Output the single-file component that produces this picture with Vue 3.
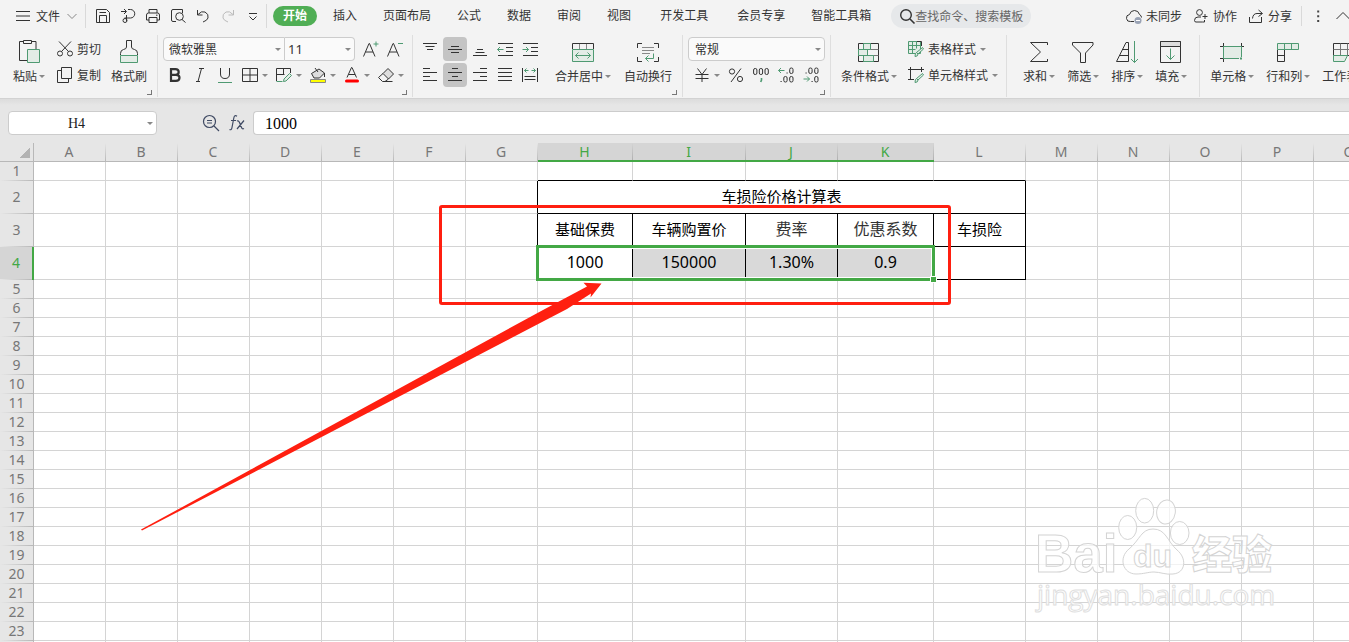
<template>
  <div class="app">
    <header class="ribbon">
      <div class="menu-bar">
        <button class="file-btn">
          <Icon name="burger" />
          <span>文件</span>
          <Icon name="chevron" class="file-arrow" />
        </button>
        <div class="quick-tools">
          <button v-for="name in quickTools" :key="name" class="plain-btn" :title="name">
            <Icon :name="name" />
          </button>
        </div>
        <nav class="tabs">
          <button
            v-for="tab in tabs"
            :key="tab"
            class="tab"
            :class="{ active: tab === activeTab, wide: tab === '开发工具' }"
            @click="activeTab = tab"
          >{{ tab }}</button>
        </nav>
        <label class="search">
          <Icon name="search" />
          <input type="text" placeholder="查找命令、搜索模板" />
        </label>
        <div class="account">
          <button class="plain-btn account-btn"><Icon name="cloud" />未同步</button>
          <button class="plain-btn account-btn"><Icon name="person" />协作</button>
          <button class="plain-btn account-btn"><Icon name="share" />分享</button>
        </div>
        <div class="window-tools">
          <button class="plain-btn"><Icon name="dots" /></button>
          <button class="plain-btn"><Icon name="collapse" /></button>
        </div>
      </div>

      <div class="tool-bar">
        <section class="group clip-group">
          <button class="big-btn"><Icon name="paste" :size="24" /><span class="caret-label">粘贴</span></button>
          <div class="rows">
            <button class="row-btn"><Icon name="cut" />剪切</button>
            <button class="row-btn"><Icon name="copy" />复制</button>
          </div>
          <button class="big-btn brush-btn"><Icon name="brush" :size="24" /><span>格式刷</span></button>
          <i class="corner"></i>
        </section>

        <section class="group font-group">
          <div class="rows">
            <div class="row">
              <div class="joined">
                <div class="select-box font-name">
                  <select aria-label="字体"><option>微软雅黑</option></select>
                </div>
                <div class="select-box font-size">
                  <select aria-label="字号"><option>11</option></select>
                </div>
              </div>
              <button class="plain-btn grow-btn"><Icon name="grow" /></button>
              <button class="plain-btn grow-btn"><Icon name="shrink" /></button>
            </div>
            <div class="row format-row">
              <button class="plain-btn slim"><Icon name="bold" /></button>
              <button class="plain-btn slim"><Icon name="italic" /></button>
              <button class="plain-btn slim"><Icon name="underline" /></button>
              <button v-for="name in cellTools" :key="name" class="plain-btn drop"><Icon :name="name" /></button>
            </div>
          </div>
          <i class="corner"></i>
        </section>

        <section class="group align-group">
          <div class="align-grid">
            <button
              v-for="name in alignTools"
              :key="name"
              class="plain-btn align-btn"
              :class="{ on: name === 'alignMiddle' || name === 'alignCenter' }"
            ><Icon :name="name" /></button>
          </div>
          <button class="big-btn"><Icon name="merge" :size="24" /><span class="caret-label">合并居中</span></button>
          <button class="big-btn"><Icon name="wrap" :size="24" /><span>自动换行</span></button>
          <i class="corner"></i>
        </section>

        <section class="group number-group">
          <div class="rows">
            <div class="select-box number-format">
              <select aria-label="数字格式"><option>常规</option></select>
            </div>
            <div class="row number-row">
              <button class="plain-btn drop"><Icon name="yen" /></button>
              <button v-for="name in numberTools" :key="name" class="plain-btn slim"><Icon :name="name" /></button>
            </div>
          </div>
          <i class="corner"></i>
        </section>

        <section class="group style-group">
          <button class="big-btn"><Icon name="condition" :size="24" /><span class="caret-label">条件格式</span></button>
          <div class="rows">
            <button class="row-btn drop"><Icon name="tableStyle" />表格样式</button>
            <button class="row-btn drop"><Icon name="cellStyle" />单元格样式</button>
          </div>
        </section>

        <section class="group edit-group">
          <button v-for="item in editTools" :key="item.icon" class="big-btn">
            <Icon :name="item.icon" :size="24" /><span class="caret-label">{{ item.label }}</span>
          </button>
        </section>

        <section class="group cell-group">
          <button v-for="item in sheetTools" :key="item.icon" class="big-btn">
            <Icon :name="item.icon" :size="24" /><span class="caret-label">{{ item.label }}</span>
          </button>
        </section>
      </div>
    </header>

    <div class="formula-bar">
      <div class="name-box">
        <input type="text" aria-label="名称框" value="H4" />
      </div>
      <button class="plain-btn zoom-btn"><Icon name="lookup" /></button>
      <button class="plain-btn fx-btn"><Icon name="fx" /></button>
      <input class="formula-input" type="text" aria-label="编辑栏" value="1000" />
    </div>

    <main class="sheet">
      <table class="grid">
        <colgroup>
          <col class="col-row" />
          <col v-for="c in columns" :key="c" :class="'col-' + c.toLowerCase()" />
        </colgroup>
        <thead>
          <tr>
            <th class="select-all"></th>
            <th v-for="c in columns" :key="c" class="col-head" :class="{ picked: 'HIJK'.includes(c) }">{{ c }}</th>
          </tr>
        </thead>
        <tbody>
          <tr v-for="r in rowCount" :key="r" :class="{ tall: r >= 2 && r <= 4 }">
            <th class="row-head" :class="{ picked: r === 4 }">{{ r }}</th>
            <td
              v-for="cell in cellsOf(r)"
              :key="cell.col"
              :colspan="cell.span"
              :class="cell.classes"
            >{{ cell.text }}<div v-if="cell.col === 'H' && r === 4" class="selection"><i class="handle"></i></div></td>
          </tr>
        </tbody>
      </table>

      <div class="mark-box"></div>
      <svg class="mark-arrow" width="480" height="260" viewBox="130 280 480 260">
        <path d="M141 529.6 L543 310 L587 286.5 L583.5 282.8 L601.5 283.6 L590.5 297.5 L591 293.5 L567 309 L142 530.6z" fill="#ff1f10" />
      </svg>

      <svg class="watermark" width="329" height="152" viewBox="0 0 329 152">
        <g class="watermark-shape">
          <ellipse cx="107.7" cy="37.5" rx="9" ry="12" />
          <ellipse cx="124.7" cy="20.7" rx="9" ry="12.3" />
          <ellipse cx="146" cy="22" rx="9.3" ry="12" transform="rotate(8 146 22)" />
          <ellipse cx="159.7" cy="43" rx="9.3" ry="11.5" />
          <path d="M133 39C121 39 120 50 109 59C98 68 103 84 116 84C124 84 128 82 134 82C140 82 146 85 153 84C166 83 167 68 157 60C147 51 146 39 133 39z" />
          <text class="mark-bai" x="15" y="82">Bai</text>
          <text class="mark-du" x="113" y="77">du</text>
          <text class="mark-cn" x="172" y="79">经验</text>
          <text class="mark-url" x="17" y="115">jingyan.baidu.com</text>
        </g>
      </svg>
    </main>
  </div>
</template>

<script setup>
import { computed, h, onBeforeUnmount, onMounted, ref } from 'vue'

const G = 'stroke="#4f9a72"'
const GF = 'stroke="#4f9a72" fill="#e3ece6"'

const pen = `<path ${GF} d="M14.5 6.5l1 1.5-5.5 5-1.5-1.5zM8.5 11.5q-1.5.5-1.5 4 3 0 3-2.5"/>`

const icons = {
  burger: '<path d="M1 3.5h14M1 8h14M1 12.5h14"/>',
  chevron: '<path stroke="#888" d="M3.5 6l4.5 4.5L12.500 6"/>',
  save: '<path d="M1.500 1.500h10l3 3v10h-13zM4.500 14v-6.500h7V14M4.500 4.500h6.500"/>',
  exportPdf: '<path d="M1 3.500h5M4 1l2.500 2.500L4 6M8 1.500h2.500a4 4 0 0 1 0 8.500H4.500M6.500 7v6"/><circle cx="5" cy="12.500" r="2"/>',
  print: '<path d="M4 5V1.500h8V5M4 12H1.500V7q0-2 2-2h9q2 0 2 2v5H12M4 9.500h8v5H4zM11 7.200h1.500"/>',
  preview: '<path d="M6 13.500H3q-1.500 0-1.500-1.500V3Q1.500 1.500 3 1.500h9.500V5"/><circle cx="9.500" cy="8.500" r="3.800"/><path d="M12 11.500l3.500 3"/>',
  undo: '<path d="M2.500 2v5h5M3 6.500q3.500-4 7-2.500 4 2 3 6-.8 2.500-5 4"/>',
  redo: '<path stroke="#bbb" d="M13.500 2v5h-5M13 6.500q-3.500-4-7-2.500-4 2-3 6 .8 2.500 5 4"/>',
  more: '<path d="M4 5.500h8M4.500 8.500l3.500 3.500 3.500-3.500"/>',
  search: '<circle cx="7" cy="7" r="5.300" stroke-width="1.400"/><path stroke-width="1.600" d="M11 11l4.500 4.500"/>',
  cloud: '<path d="M8 13.500H4.500A3.500 3.500 0 0 1 3.500 6.500Q4.500 2.500 8.500 2.500t5 4q2 1 2 3"/><circle cx="12" cy="12.500" r="3.500" fill="#9aa3b5" stroke="none"/><path stroke="#fff" d="M10 12.500h4"/>',
  person: '<circle cx="6.500" cy="4.500" r="2.900"/><path d="M9.500 14H3q-1.500 0-1.500-1.500Q1.500 9 5 9h3M9.500 8.500h5M12 6v5M9.500 14h2v-2"/>',
  share: '<path d="M1.500 9v5.500h12V9M10.500 2l4 3.500-4 3M14 5.500H9q-4 0-4.500 5"/>',
  dots: '<path fill="#444" stroke="none" d="M7.200 2.500h2v2h-2zM7.200 7.200h2v2h-2zM7.200 12h2v2h-2z"/>',
  collapse: '<path d="M1.500 11L8 4.500l6.500 6.500"/>',

  paste: `<path d="M10 20.500H2.500v-19h4M15 1.500h4v8M6.500.500h8v3h-8z"/><path ${GF} d="M10.500 9.500h12v13h-12z"/>`,
  brush: `<path d="M3.500 15v-1.500q0-3.500 3-4 3-.5 3-2.500V.500h5V7q0 2 3 2.500 3 .5 3 4V15"/><path ${GF} d="M3.500 15.500h17v7h-17z"/>`,
  cut: '<circle cx="3" cy="12.500" r="2.500"/><circle cx="13" cy="12.500" r="2.500"/><path d="M2 .500l9.500 10M14 .500l-9.500 10"/>',
  copy: '<path d="M4.500.500h10v11h-10zM4.500 3.500h-4v12h11v-4"/>',

  grow: `<path d="M.500 15.500L6 2.500h.5l5.500 13M2.500 11h7.500"/><path ${G} d="M10.500 3h5M13 .500v5"/>`,
  shrink: `<path d="M.500 15.500L6 2.500h.5l5.500 13M2.500 11h7.500"/><path ${G} d="M11 2.500h5"/>`,
  bold: '<path stroke-width="2.200" d="M4 2.200h4.500q3.200 0 3.200 2.800T8.500 7.800H4zM4 7.800h5q3.500 0 3.500 3t-3.500 3H4z"/>',
  italic: '<path d="M7 1.500h5M4 14.500h4M9.500 1.500l-3.500 13"/>',
  underline: `<path d="M3.500 1v6q0 4.500 4.500 4.500T12.500 7V1"/><path ${G} d="M1 15.500h14"/>`,
  borders: '<path d="M.500 1.500h15v13H.500zM8 1.500v13M.500 8h15"/>',
  drawBorder: `<path d="M.500 14V1.500h14V6M.500 7.500h8M7.500 1.500V8"/><path ${G} d="M.500 14.500h6"/><path ${GF} d="M13.500 6.500l2 2-5.500 5.500-2.500.5.5-2.500z"/>`,
  fill: '<path fill="#ddd" d="M1.500 6.500L9 2l5.500 4-5 5H4z"/><path d="M5 1l3 4M14.500 6v4"/><path stroke="#888" fill="#ff0" d="M.500 12.500h15v3H.500z"/>',
  fontColor: '<path d="M3 10.500L7.500.500h.5l4.500 10M4.500 7.500H11"/><path stroke="red" stroke-width="3" stroke-linecap="round" d="M2.500 14h11"/>',
  eraser: '<path fill="#ddd" d="M10 1.500l5.500 5.500-5 5L5 6.500z"/><path d="M5 6.500L.500 10.500l4 4h2.500l3.500-2.500M6 14.500h8.500"/>',

  alignTop: '<path d="M1 2.500h14M3.500 5.500h9M5 8.500h6"/>',
  alignMiddle: '<path d="M4 5.500h8M1 8.500h14M4 11.500h8"/>',
  alignBottom: '<path d="M5 8.500h6M3.500 11.500h9M1 14.500h14"/>',
  outdent: `<path d="M1 2.500h15M9 6.500h7M9 10.500h7M1 14.500h15"/><path ${G} d="M.500 8.500h6M3 6L.500 8.500 3 11"/>`,
  indent: `<path d="M1 2.500h15M9 6.500h7M9 10.500h7M1 14.500h15"/><path ${G} d="M.500 8.500h6M4 6l2.500 2.500L4 11"/>`,
  alignLeft: '<path d="M1 1.500h7M1 5.500h14M1 9.500h7M1 13.500h14"/>',
  alignCenter: '<path d="M5 1.500h6M1 5.500h14M5 9.500h6M1 13.500h14"/>',
  alignRight: '<path d="M8 1.500h7M1 5.500h14M8 9.500h7M1 13.500h14"/>',
  justify: '<path d="M1 1.500h14M1 5.500h14M1 9.500h14M1 13.500h14"/>',
  distribute: `<path d="M.500 1v14M15.500 1v14M2.500 9.500h11M2.500 12.500h11"/><path ${G} d="M2.500 3.500h4M4.500 1.500l-2 2 2 2M13.500 3.500h-4M11.500 1.500l2 2-2 2"/>`,
  merge: `<path d="M1.500 9V3.500h21V9"/><path stroke="#888" d="M8.500 4v5M15.500 4v5"/><path ${GF} d="M1.500 9.500h21v12h-21z"/><path ${G} d="M4.500 15.500h15M7.500 12.500l-3 3 3 3M16.500 12.500l3 3-3 3"/>`,
  wrap: `<path d="M1.500 8V3.500H6M18 3.500h4.500V8M1.500 17v4.500H6M18 21.500h4.500V17"/><path stroke="#888" d="M6 7.500h12M6 10.500h12M6 13.500h8"/><path ${G} d="M17.500 13.500v5H9.500M12.500 15.500l-3 3 3 3"/>`,

  yen: '<path d="M3.500 1.500L8 7.500l4.500-6M8 7.500V15M1.500 7.500h13M1.500 11.500h13"/>',
  percent: '<circle cx="4" cy="4.500" r="2.600"/><circle cx="12" cy="12" r="2.600"/><path d="M13 1.500L3 15"/>',
  thousands: `<rect x=".6" y="1.500" width="3.300" height="6" rx="1.500"/><rect x="6.300" y="1.500" width="3.300" height="6" rx="1.500"/><rect x="12" y="1.500" width="3.300" height="6" rx="1.500"/><path stroke="#4f9a72" stroke-width="1.600" d="M8.500 11v2l-.8 2"/>`,
  addDecimal: `<rect x="11.700" y="1" width="3.300" height="5.500" rx="1.500"/><rect x="5.800" y="9.500" width="3.300" height="5.500" rx="1.500"/><rect x="11.700" y="9.500" width="3.300" height="5.500" rx="1.500"/><path d="M2.500 14.500h1.200M8.500 6h1.200"/><path ${G} d="M.500 3.500h6M3 1L.500 3.500 3 6"/>`,
  cutDecimal: `<rect x="5.800" y="1" width="3.300" height="5.500" rx="1.500"/><rect x="11.700" y="1" width="3.300" height="5.500" rx="1.500"/><rect x="11.700" y="9.500" width="3.300" height="5.500" rx="1.500"/><path d="M2.500 6h1.200M8.500 14.500h1.200"/><path ${G} d="M.500 12h6M4 9.500L6.500 12 4 14.500"/>`,

  condition: `<path d="M1.500 3.500h20v18h-20z"/><path stroke="#777" d="M1.500 9.500h20M1.500 15.500h20"/><path ${GF} d="M6.500 3.500h7v6h-7zM1.500 9.500h9v6h-9zM6.500 15.500h10v6h-10z"/>`,
  tableStyle: `<path ${GF} d="M.500.500h12v12H.500z"/><path d="M9 .500h4.500v4.500"/><path ${G} d="M.500 4.500h12M.500 8.500h7M4.500.500v12M8.500.500v7"/>${pen}`,
  cellStyle: `<path d="M0 2.500h16M2.500 0v13M13.500 0v5M0 12.500h6"/>${pen}`,
  sum: '<path d="M20.500 5V2.500h-17L13.500 12l-10 9.500h17V19"/>',
  filter: '<path d="M1.500 2.500h20.500v2.500l-7.500 8v9.500h-5V13l-8-8z"/>',
  sort: `<path d="M1.500 21.500L11 2.500h2.500v19zM7.500 9.500h6M4.500 15.500h9"/><path ${G} d="M19.500 1v21.500M16 19l3.500 3.500L23 19"/>`,
  fillDown: `<path d="M1.500 1.500h20v21h-20z"/><path fill="#ddd" d="M1.500 1.500h20v5h-20z"/><path ${G} d="M11.500 8.500v11M7.500 15.500l4 4 4-4"/>`,
  cells: `<path d="M0 6.500h24M3.500 3v19M21.500 3v11M0 18.500h16"/><path ${GF} d="M19 18.500H3.500v-12h18V17"/><path stroke="none" fill="#4f9a72" d="M20 17.500h2v2h-2z"/>`,
  rowCol: `<path d="M1.500 9.500v12h7v-12M1.500 15.500h7"/><path ${GF} d="M1.500 3.500h21v6h-21z"/><path ${G} d="M8.500 3.500v6M15.500 3.500v6"/>`,
  worksheet: `<path d="M1.500 3.500h21v12h-21z"/><path stroke="#777" d="M1.500 9.500h21M8.500 3.500v12M15.500 3.500v12"/><path ${GF} d="M1.500 15.500h14l-3 6h-11z"/>`,

  lookup: '<g stroke="#3f4a63" stroke-width="1.200"><circle cx="6.500" cy="6.500" r="6"/><path d="M4 5.500h5M4 8h5M11 11l5 5"/></g>',
  fx: '<path stroke="#3f4a63" stroke-width="1.200" d="M8 1.200Q5.500-.500 4.800 3L3 12.500q-.5 3-2.500 2M2 5.500h5M8 6q1.500-.8 2.500 1.500l2 5q.8 2 2.500 1M15 5.500L8 14"/>'
}

const Icon = (props) =>
  h('svg', {
    class: 'icon',
    width: props.size || 16,
    height: props.size || 16,
    viewBox: props.size ? '0 0 24 24' : '0 0 16 16',
    fill: 'none',
    stroke: '#333',
    'aria-hidden': 'true',
    innerHTML: icons[props.name]
  })
Icon.props = ['name', 'size']

const activeTab = ref('开始')
const tabs = ['开始', '插入', '页面布局', '公式', '数据', '审阅', '视图', '开发工具', '会员专享', '智能工具箱']
const quickTools = ['save', 'exportPdf', 'print', 'preview', 'undo', 'redo', 'more']
const cellTools = ['borders', 'drawBorder', 'fill', 'fontColor', 'eraser']
const alignTools = [
  'alignTop', 'alignMiddle', 'alignBottom', 'outdent', 'indent',
  'alignLeft', 'alignCenter', 'alignRight', 'justify', 'distribute'
]
const numberTools = ['percent', 'thousands', 'addDecimal', 'cutDecimal']
const editTools = [
  { icon: 'sum', label: '求和' },
  { icon: 'filter', label: '筛选' },
  { icon: 'sort', label: '排序' },
  { icon: 'fillDown', label: '填充' }
]
const sheetTools = [
  { icon: 'cells', label: '单元格' },
  { icon: 'rowCol', label: '行和列' },
  { icon: 'worksheet', label: '工作表' }
]

// only as many rows and columns as the window can show
const winWidth = ref(window.innerWidth)
const winHeight = ref(window.innerHeight)
const columns = computed(() => {
  const count = Math.max(12, Math.ceil((winWidth.value - 162) / 72))
  return 'ABCDEFGHIJKLMNOPQRSTUVWXYZ'.slice(0, count).split('')
})
const rowCount = computed(() => Math.max(4, Math.ceil((winHeight.value - 204) / 19)))

function onResize() {
  winWidth.value = window.innerWidth
  winHeight.value = window.innerHeight
}
onMounted(() => window.addEventListener('resize', onResize))
onBeforeUnmount(() => window.removeEventListener('resize', onResize))

const data = {
  H2: '车损险价格计算表',
  H3: '基础保费', I3: '车辆购置价', J3: '费率', K3: '优惠系数', L3: '车损险',
  H4: '1000', I4: '150000', J4: '1.30%', K4: '0.9'
}

function cellsOf(r) {
  const inTable = r >= 2 && r <= 4
  // the title in row 2 is merged over H:L
  return columns.value
    .filter((c) => !(r === 2 && 'IJKL'.includes(c)))
    .map((c) => ({
      col: c,
      text: data[c + r] || '',
      span: r === 2 && c === 'H' ? 5 : 1,
      classes: {
        'line-right': inTable && ('GL'.includes(c) || (r > 2 && 'HIJK'.includes(c)) || c === 'H'),
        'line-bottom': r <= 4 && 'HIJKL'.includes(c),
        shaded: r === 4 && 'IJK'.includes(c),
        soft: r === 3 && 'JK'.includes(c),
        number: r === 4,
        current: r === 4 && c === 'H'
      }
    }))
}
</script>

<style>
body {
  margin: 0;
}
</style>

<style scoped>
.app {
  display: flex;
  flex-direction: column;
  height: 100vh;
  overflow: hidden;
  background: #fff;
  color: #333;
  font-family: "Noto Sans", "Noto Sans CJK SC", sans-serif;
  font-size: 12px;
}

button,
input,
select {
  margin: 0;
  padding: 0;
  border: 0;
  background: none;
  color: inherit;
  font: inherit;
  outline: none;
}

.icon {
  display: block;
  flex-shrink: 0;
  overflow: visible;
}

.plain-btn {
  display: flex;
  align-items: center;
  flex-shrink: 0;
}

/* menu row */
.ribbon {
  flex-shrink: 0;
  background: #f3f3f3;
  border-bottom: 1px solid #d2d2d2;
  overflow: hidden;
}

.menu-bar {
  display: flex;
  align-items: center;
  height: 32px;
  padding-left: 15px;
  white-space: nowrap;
}

.file-btn {
  display: flex;
  align-items: center;
  gap: 5px;
  height: 24px;
  padding-right: 5px;
  border-right: 1px solid #d9d9d9;
}

.file-arrow {
  margin-left: -1px;
}

.quick-tools {
  display: flex;
  align-items: center;
  gap: 9px;
  height: 24px;
  padding: 0 5px 0 9px;
  border-right: 1px solid #d9d9d9;
}

.tabs {
  display: flex;
  align-items: center;
  margin-left: 6px;
}

.tab {
  height: 20px;
  padding: 0 13px;
  line-height: 20px;
}

.tab.wide {
  padding: 0 16px;
}

.tab.active {
  margin-right: 3px;
  padding: 0 10px;
  border-radius: 10px;
  background: #50ae55;
  color: #fff;
  font-weight: bold;
}

.search {
  display: flex;
  align-items: center;
  width: 132px;
  height: 24px;
  margin-left: 7px;
  padding-left: 8px;
  border-radius: 12px;
  background: #e6e8ea;
}

.search input {
  width: 110px;
}

.search input::placeholder {
  color: #666;
  opacity: 1;
}

.account {
  display: flex;
  gap: 11px;
  height: 20px;
  margin-left: auto;
  padding-right: 9px;
  border-right: 1px solid #d9d9d9;
}

.account-btn {
  gap: 4px;
}

.window-tools {
  display: flex;
  gap: 9px;
  padding-left: 8px;
  width: 39px;
}

/* tool groups */
.tool-bar {
  display: flex;
  height: 63px;
  padding: 3px 0 0;
  white-space: nowrap;
}

.group {
  position: relative;
  display: flex;
  flex-shrink: 0;
  box-sizing: border-box;
  padding-top: 2px;
  height: 62px;
  border-right: 1px solid #dedede;
}

.clip-group {
  gap: 12px;
  padding-left: 13px;
  padding-right: 10px;
}

.font-group {
  width: 255px;
  padding-left: 5px;
}

.align-group {
  gap: 13px;
  padding-left: 5px;
  padding-right: 10px;
}

.number-group {
  padding-left: 5px;
  padding-right: 5px;
}

.style-group {
  gap: 11px;
  padding-left: 10px;
  padding-right: 8px;
}

.edit-group {
  gap: 12px;
  padding-left: 16px;
  padding-right: 12px;
}

.cell-group {
  gap: 12px;
  padding-left: 10px;
  border-right: 0;
}

.corner {
  position: absolute;
  right: 5px;
  bottom: 2px;
  width: 4px;
  height: 4px;
  border-right: 1px solid #777;
  border-bottom: 1px solid #777;
}

.big-btn {
  display: flex;
  flex-direction: column;
  align-items: center;
  gap: 4px;
  height: 50px;
  padding-top: 3px;
  line-height: 18px;
}

.brush-btn {
  margin-left: -2px;
}

.caret-label::after,
.drop::after {
  content: "";
  display: inline-block;
  width: 0;
  border: 3px solid transparent;
  border-top-color: #888;
  border-bottom: 0;
}

.caret-label::after {
  margin-left: 2px;
  vertical-align: 3px;
}

.drop::after {
  margin-left: 4px;
}

.rows {
  display: flex;
  flex-direction: column;
  gap: 2px;
}

.row {
  display: flex;
  align-items: center;
  gap: 8px;
  height: 24px;
}

.row-btn {
  display: flex;
  align-items: center;
  height: 24px;
  text-align: left;
}

.row-btn .icon {
  margin-right: 4px;
}

.format-row {
  padding-left: 4px;
}

.number-row {
  padding-left: 6px;
}

.slim {
  width: 17px;
}

.joined {
  display: flex;
}

.select-box {
  position: relative;
  box-sizing: border-box;
  height: 24px;
  border: 1px solid #ccc;
  border-radius: 4px;
  background: #fafafa;
}

.select-box::after,
.name-box::after {
  content: "";
  position: absolute;
  top: 10px;
  right: 3px;
  border: 3px solid transparent;
  border-top-color: #888;
  border-bottom: 0;
  pointer-events: none;
}

.select-box select {
  display: block;
  width: 100%;
  height: 22px;
  appearance: none;
}

.font-name {
  width: 122px;
  padding-left: 5px;
  border-radius: 4px 0 0 4px;
}

.font-size {
  width: 70px;
  padding-left: 3px;
  border-left: 0;
  border-radius: 0 4px 4px 0;
  font-size: 13px;
}

.number-format {
  width: 137px;
  padding-left: 6px;
}

.align-grid {
  display: grid;
  grid-template-columns: repeat(5, 24px);
  grid-template-rows: repeat(2, 24px);
  gap: 2px 1px;
}

.align-btn {
  justify-content: center;
  border-radius: 4px;
}

.align-btn.on {
  background: #c4c4c4;
}

/* formula bar */
.formula-bar {
  display: flex;
  align-items: center;
  flex-shrink: 0;
  height: 44px;
  box-sizing: border-box;
  padding: 8px 0 4px 8px;
  background: linear-gradient(#dcdcdc, #e6e6e6 6px);
  font-family: "Liberation Serif", serif;
  color: #222;
}

.name-box {
  position: relative;
  box-sizing: border-box;
  width: 149px;
  height: 24px;
  padding-right: 12px;
  border: 1px solid #ccc;
  border-radius: 4px;
  background: #fff;
}

.name-box input {
  box-sizing: border-box;
  width: 100%;
  height: 22px;
  padding-top: 2px;
  text-align: center;
  font-size: 14px;
}

.zoom-btn {
  margin-left: 46px;
}

.fx-btn {
  margin-left: 10px;
}

.formula-input {
  flex: 1;
  box-sizing: border-box;
  height: 24px;
  margin-left: 8px;
  padding-top: 2px;
  padding-left: 11px;
  border: 1px solid #ccc;
  border-right: 0;
  border-radius: 4px 0 0 4px;
  background: #fff;
  color: #000;
  font-size: 16px;
}

/* sheet */
.sheet {
  position: relative;
  flex: 1;
  min-height: 0;
  overflow: hidden;
}

.grid {
  width: 100%;
  table-layout: fixed;
  border-collapse: separate;
  border-spacing: 0;
}

.grid col {
  width: 72px;
}

.grid .col-row {
  width: 34px;
}

.grid .col-h {
  width: 95px;
}

.grid .col-i {
  width: 113px;
}

.grid .col-j,
.grid .col-l {
  width: 92px;
}

.grid .col-k {
  width: 96px;
}

.grid th,
.grid td {
  box-sizing: border-box;
  height: 19px;
  padding: 0;
  text-align: center;
  vertical-align: middle;
  white-space: nowrap;
}

.grid th {
  background: #e6e6e6;
  color: #777;
  font-size: 14px;
  font-weight: normal;
  line-height: 18px;
}

.grid td {
  border-right: 1px solid #d4d4d4;
  border-bottom: 1px solid #d4d4d4;
  color: #000;
  font-size: 15px;
  line-height: 18px;
}

.grid .tall th,
.grid .tall td {
  height: 33px;
  padding-bottom: 2px;
}

.grid .col-head {
  padding-right: 2px;
  border-bottom: 1px solid #b8b8b8;
  background: linear-gradient(#e6e6e6, #b8b8b8) right / 1px 100% no-repeat #e6e6e6;
}

.grid .col-head.picked {
  border-bottom: 2px solid #43a845;
  background: linear-gradient(#d5d5d5, #b0b0b0) right / 1px 100% no-repeat #d5d5d5;
  color: #43a845;
  line-height: 17px;
}

.grid .row-head {
  padding-bottom: 2px;
  border-right: 1px solid #b8b8b8;
  background: linear-gradient(to right, #e6e6e6, #b8b8b8) bottom / 100% 1px no-repeat #e6e6e6;
  line-height: 16px;
}

.grid .row-head.picked {
  border-right: 2px solid #43a845;
  background-color: #d5d5d5;
  color: #43a845;
}

.grid .select-all {
  border-right: 1px solid #b8b8b8;
  border-bottom: 1px solid #b8b8b8;
  background: linear-gradient(135deg, transparent 50%, #b3b3b3 50%) 20px 5px / 10px 10px no-repeat #e6e6e6;
}

.grid .line-right {
  border-right-color: #000;
}

.grid .line-bottom {
  border-bottom-color: #000;
}

.grid .shaded {
  background: #d9d9d9;
}

.grid .number {
  font-size: 16px;
}

.grid .soft {
  color: #333;
  font-size: 16px;
}

.grid .current {
  position: relative;
}

/* runs from H4 over the three cells to its right */
.selection {
  position: absolute;
  z-index: 1;
  top: -2px;
  left: -2px;
  box-sizing: border-box;
  width: 399px;
  height: 36px;
  border: 3px solid #43a845;
  box-shadow: inset 0 0 0 1px #fff;
}

.handle {
  position: absolute;
  right: -5px;
  bottom: -5px;
  width: 5px;
  height: 5px;
  border: 1px solid #fff;
  background: #43a845;
}

.mark-box {
  position: absolute;
  z-index: 2;
  top: 62px;
  left: 439px;
  box-sizing: border-box;
  width: 512px;
  height: 100px;
  border: 3px solid #ff1f10;
  border-radius: 3px;
}

.mark-arrow {
  position: absolute;
  z-index: 2;
  top: 137px;
  left: 130px;
}

.watermark {
  position: absolute;
  top: 347px;
  left: 1020px;
}

.watermark-shape {
  fill: #fff;
  fill-opacity: 0.7;
  stroke: #d4d4d4;
  stroke-width: 1px;
}

.mark-bai {
  font: bold 53px "Liberation Sans", sans-serif;
}

.mark-du {
  font: bold 32px "Liberation Sans", sans-serif;
}

.mark-cn {
  font: 900 40px "Noto Sans CJK SC", sans-serif;
}

.mark-url {
  font: 28px "Open Sans", sans-serif;
  fill-opacity: 0.9;
  stroke: #dedede;
}
</style>
